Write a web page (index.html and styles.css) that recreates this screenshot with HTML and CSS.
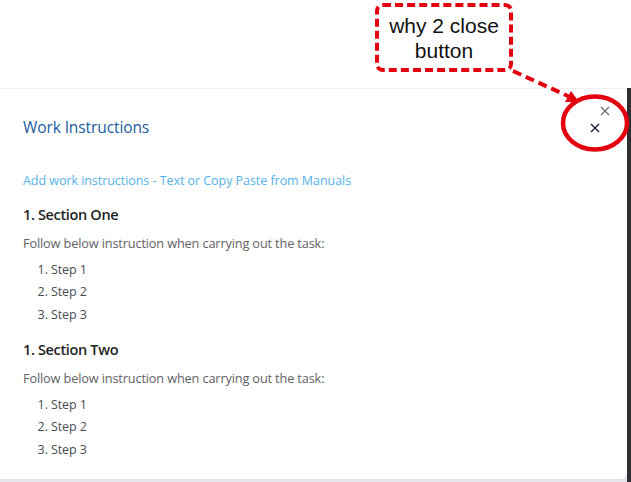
FILE: index.html
```html
<!DOCTYPE html>
<html>
<head>
<meta charset="utf-8">
<link rel="stylesheet" href="styles.css">
</head>
<body>
<div class="page">
  <div class="top-space"></div>
  <div class="frame">
    <div class="modal">
      <div class="modal-header">
        <h2 class="modal-title">Work Instructions</h2>
      </div>
      <div class="modal-body">
        <a class="add-link">Add work instructions - Text or Copy Paste from Manuals</a>
        <h3 class="section-title">1. Section One</h3>
        <p class="section-text">Follow below instruction when carrying out the task:</p>
        <ol class="steps">
          <li>Step 1</li>
          <li>Step 2</li>
          <li>Step 3</li>
        </ol>
        <h3 class="section-title">1. Section Two</h3>
        <p class="section-text">Follow below instruction when carrying out the task:</p>
        <ol class="steps">
          <li>Step 1</li>
          <li>Step 2</li>
          <li>Step 3</li>
        </ol>
      </div>
    </div>
    <div class="side-strip"></div>
  </div>

  <button class="close close-outer" aria-label="Close">
    <svg width="10" height="10" viewBox="0 0 10 10"><path d="M1 1L9 9M9 1L1 9" stroke="#6b6f7a" stroke-width="1.3" fill="none"/></svg>
  </button>
  <button class="close close-inner" aria-label="Close">
    <svg width="10" height="10" viewBox="0 0 10 10"><path d="M1 1L9 9M9 1L1 9" stroke="#1f2233" stroke-width="1.4" fill="none"/></svg>
  </button>

  <div class="callout">why 2 close<br>button</div>
  <svg class="annotation" width="631" height="482" viewBox="0 0 631 482">
    <path d="M513 71 L570 97" stroke="#e3000f" stroke-width="4" stroke-dasharray="9 5" fill="none"/>
    <path d="M579 102 L565 102 L571 91 Z" fill="#e3000f"/>
    <ellipse cx="595" cy="123" rx="32" ry="26.5" stroke="#e3000f" stroke-width="4.5" fill="none"/>
  </svg>
</div>
</body>
</html>
```
FILE: styles.css
```css
html, body {
  margin: 0;
  padding: 0;
  background: #ffffff;
}
.page {
  position: relative;
  width: 631px;
  height: 482px;
  overflow: hidden;
  display: flex;
  flex-direction: column;
  font-family: "Segoe UI", "Open Sans", "Noto Sans", sans-serif;
}
.top-space {
  height: 88px;
  flex: none;
}
.frame {
  flex: 1;
  display: flex;
  background: #e6e6ea;
  padding-bottom: 3px;
}
.modal {
  flex: 1;
  background: #ffffff;
  border-top: 1px solid #f1f1f3;
  border-radius: 0 0 6px 0;
  display: flex;
  flex-direction: column;
}
.side-strip {
  width: 4px;
  background: #2d2f33;
  margin-bottom: -3px;
}
.modal-header {
  padding: 27px 23px 0;
  height: 50px;
  box-sizing: border-box;
}
.modal-title {
  margin: 0;
  font-size: 15.5px;
  font-weight: 400;
  color: #1c5ba0;
  line-height: 22px;
  letter-spacing: -0.1px;
}
.modal-body {
  padding: 33px 23px 0;
  display: flex;
  flex-direction: column;
}
.add-link {
  font-size: 12.5px;
  color: #55b2ea;
  line-height: 18px;
  letter-spacing: -0.05px;
  margin-bottom: 15px;
}
.section-title {
  margin: 0;
  font-size: 14.5px;
  font-weight: 600;
  color: #1e1f24;
  line-height: 20px;
  letter-spacing: -0.35px;
}
.section-text {
  margin: 9px 0 0;
  font-size: 12.75px;
  color: #5f6166;
  line-height: 18px;
  letter-spacing: -0.15px;
}
.steps {
  margin: 6.5px 0 14px;
  padding-left: 28px;
  font-size: 12.5px;
  color: #4a4c52;
  line-height: 22.5px;
  letter-spacing: -0.1px;
}
.close {
  position: absolute;
  background: none;
  border: none;
  padding: 0;
  width: 10px;
  height: 10px;
  display: flex;
}
.close-outer {
  left: 600px;
  top: 106px;
}
.close-inner {
  left: 590px;
  top: 123px;
}
.callout {
  position: absolute;
  left: 375px;
  top: 3px;
  width: 130px;
  height: 55px;
  padding-top: 6px;
  border: 4px dashed #e3000f;
  border-radius: 8px;
  font-family: "Liberation Sans", Arial, sans-serif;
  font-size: 21px;
  line-height: 25px;
  text-align: center;
  color: #111;
}
.annotation {
  position: absolute;
  left: 0;
  top: 0;
  pointer-events: none;
}
```
